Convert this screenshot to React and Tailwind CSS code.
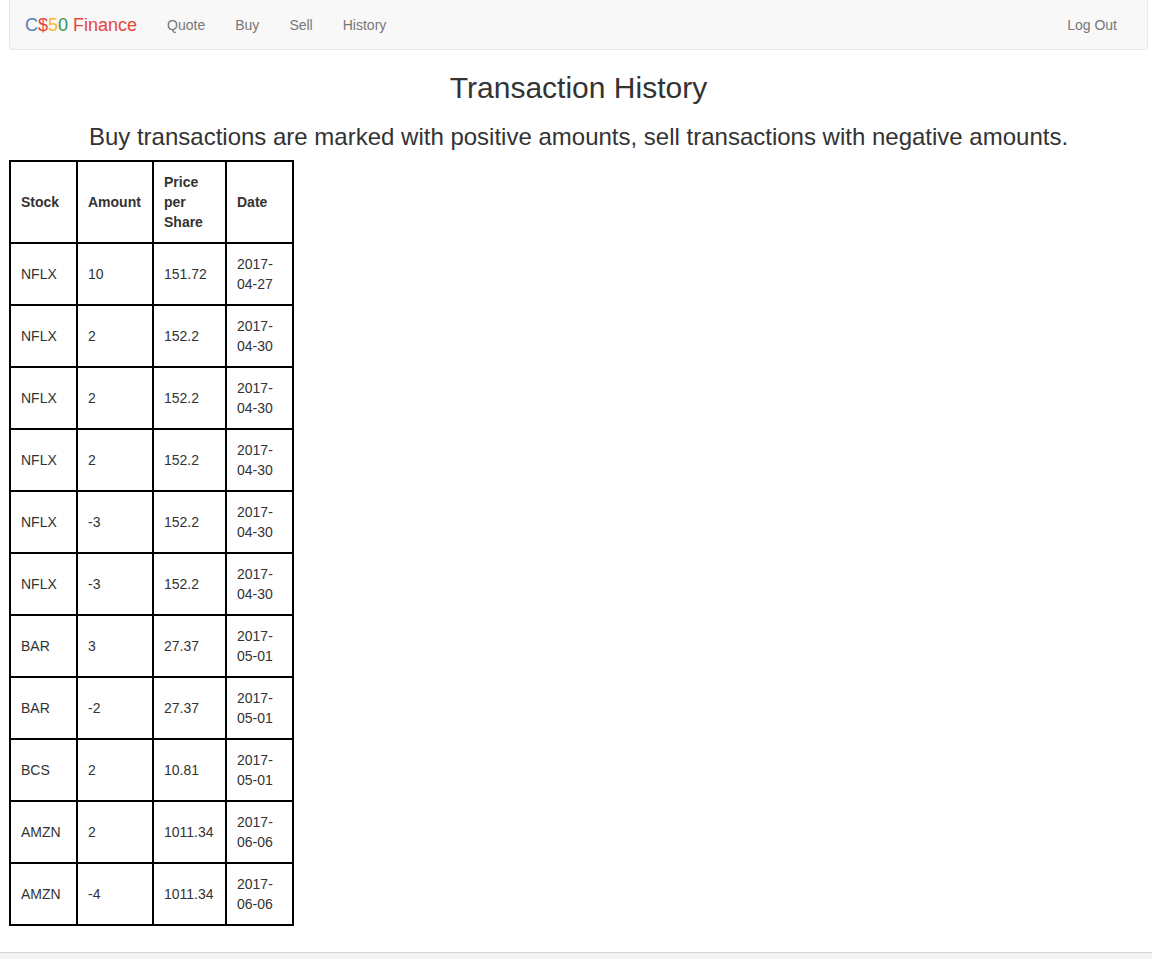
import React from "react";

const rows = [
  ["NFLX", "10", "151.72", "2017-04-27"],
  ["NFLX", "2", "152.2", "2017-04-30"],
  ["NFLX", "2", "152.2", "2017-04-30"],
  ["NFLX", "2", "152.2", "2017-04-30"],
  ["NFLX", "-3", "152.2", "2017-04-30"],
  ["NFLX", "-3", "152.2", "2017-04-30"],
  ["BAR", "3", "27.37", "2017-05-01"],
  ["BAR", "-2", "27.37", "2017-05-01"],
  ["BCS", "2", "10.81", "2017-05-01"],
  ["AMZN", "2", "1011.34", "2017-06-06"],
  ["AMZN", "-4", "1011.34", "2017-06-06"],
];

const App = () => {
  const cell = "border-b-2 border-r-2 border-black px-[10px] py-[10px] align-middle text-left";

  return (
    <div className="min-h-[959px] bg-white text-[14px] leading-[20px] text-[#333] font-['Liberation_Sans',Arial,sans-serif]">
      <div className="pl-[9px] pr-[4px]">
        {/* Navbar */}
        <nav className="flex h-[50px] items-center justify-between rounded-b-[4px] border-x border-b border-[#e7e7e7] bg-[#f8f8f8] px-[15px]">
          <div className="flex items-center">
            <a className="pr-[15px] text-[18px] leading-[20px]">
              <span className="text-[#537fbe]">C</span>
              <span className="text-[#ea433b]">$</span>
              <span className="text-[#f5b82e]">5</span>
              <span className="text-[#2e944b]">0</span>{" "}
              <span className="text-[#ea433b]">Finance</span>
            </a>
            <ul className="flex">
              {["Quote", "Buy", "Sell", "History"].map((item) => (
                <li key={item} className="px-[15px] text-[#777]">
                  {item}
                </li>
              ))}
            </ul>
          </div>
          <div className="px-[15px] text-[#777]">Log Out</div>
        </nav>

        {/* Heading */}
        <main className="mt-[21px]">
          <h2 className="text-center text-[30px] leading-[33px] font-normal">Transaction History</h2>
          <h3 className="mt-[20px] mb-[10px] text-center text-[24px] leading-[26.4px] font-normal">
            Buy transactions are marked with positive amounts, sell transactions with negative amounts.
          </h3>

          {/* History table */}
          <table className="table-fixed border-separate border-spacing-0 w-[285px]">
            <thead>
              <tr>
                <th className={`${cell} border-t-2 border-l-2 w-[69px] font-bold`}>Stock</th>
                <th className={`${cell} border-t-2 w-[76px] font-bold`}>Amount</th>
                <th className={`${cell} border-t-2 w-[73px] font-bold`}>Price per Share</th>
                <th className={`${cell} border-t-2 w-[67px] font-bold`}>Date</th>
              </tr>
            </thead>
            <tbody>
              {rows.map((r, i) => (
                <tr key={i}>
                  <td className={`${cell} border-l-2`}>{r[0]}</td>
                  <td className={cell}>{r[1]}</td>
                  <td className={cell}>{r[2]}</td>
                  <td className={cell}>{r[3]}</td>
                </tr>
              ))}
            </tbody>
          </table>
        </main>
      </div>

      {/* Footer */}
      <footer className="mt-[26px] h-[20px] border-t border-[#d4d4d4] bg-[#f2f2f2]"></footer>
    </div>
  );
};

export default App;
